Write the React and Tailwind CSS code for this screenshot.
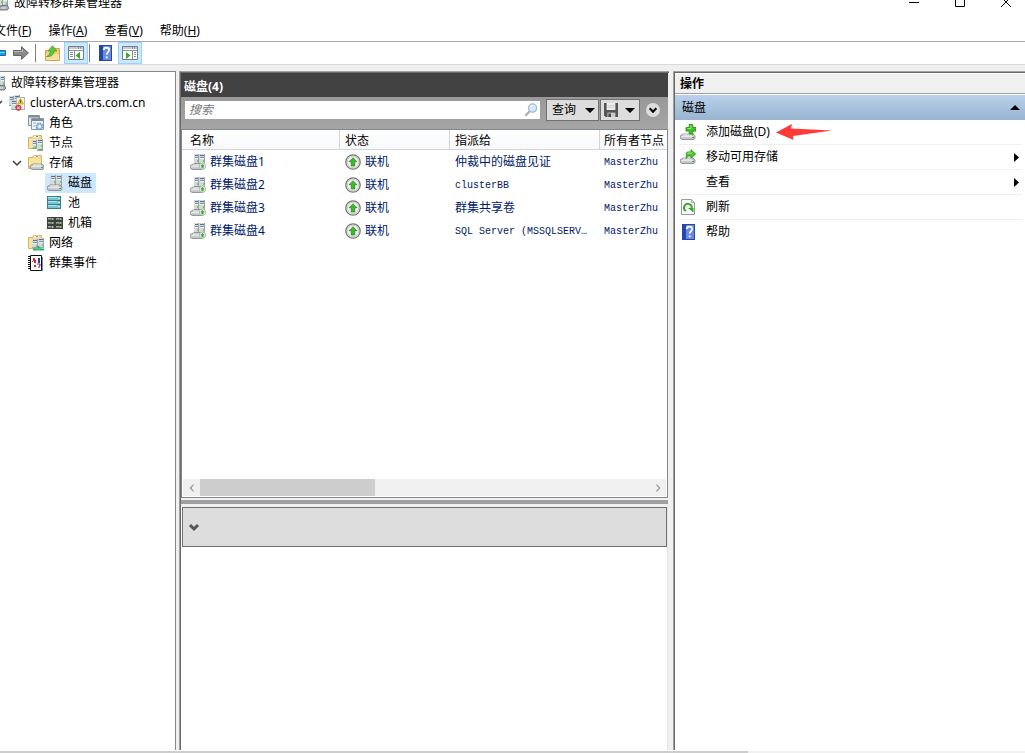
import React from "react";

const Svg = ({ children, className = "h-4 w-4" }) => (
  <svg viewBox="0 0 16 16" className={`${className} block shrink-0`} aria-hidden="true">
    {children}
  </svg>
);

const Server = ({ x, y, w = 5, h = 9 }) => (
  <g shapeRendering="crispEdges">
    <rect x={x} y={y} width={w} height={h} fill="#9aa3aa" />
    <rect x={x} y={y} width={w - 1} height={h - 1} fill="#d3d8dc" />
    <rect x={x + 1} y={y + 1} width={w - 2} height="1" fill="#5b7486" />
    <rect x={x + 1} y={y + 3} width={w - 2} height="1" fill="#7d93a2" />
    <rect x={x + 1} y={y + 4} width={w - 2} height="1" fill="#eef1f3" />
    <rect x={x + w - 2} y={y + 6} width="1" height="2" fill="#79d329" />
  </g>
);

const Drive = ({ x = 0, y = 10, w = 15 }) => (
  <g>
    <path
      d={`M${x + 3} ${y}h${w - 5}l2 2v2l-1 1.5H${x + 2}L${x} ${y + 4}V${y + 2}z`}
      fill="#c3c6c9"
      stroke="#808488"
      strokeWidth=".8"
    />
    <path d={`M${x + 3} ${y + 1}h${w - 6}`} stroke="#f7f8f9" />
    <path d={`M${x + 1} ${y + 2.7}h${w - 3}`} stroke="#ededef" />
    <rect x={x + w - 3} y={y + 3} width="2" height="1" fill="#3fb728" />
  </g>
);

const Folder = () => (
  <g>
    <path d="M.5 2.5h4l1-2h8v13H.5z" fill="#f6d989" stroke="#d9b463" />
    <path d="M1 4h12v9H1z" fill="#fbe3a0" />
    <path d="M6 1.5h5" stroke="#fff" strokeWidth="1.5" />
    <path d="M8 1.5h2" stroke="#4b9fd6" />
  </g>
);

const ManagerIcon = () => (
  <Svg>
    <Server x={5} y={0} w={5} h={12} />
    <Server x={10} y={1} w={5} h={12} />
    <path d="M7 11l7-1 2 3-2 2H6z" fill="#a6adb3" stroke="#596269" strokeWidth=".8" />
    <path d="M8 13h5" stroke="#edf1f4" />
  </Svg>
);

const ClusterIcon = () => (
  <Svg>
    <Server x={0} y={1} w={5} h={10} />
    <Server x={5} y={0} w={6} h={10} />
    <Server x={2} y={5} w={6} h={10} />
    <rect x="7.5" y="2.5" width="8" height="12" fill="#faf9ef" stroke="#b5b5ad" />
    <path d="M11.5 3.5l3 5.5h-6z" fill="#f6cf36" stroke="#c69216" strokeWidth=".7" />
    <path d="M11.5 5.3v2.4" stroke="#453410" />
    <circle cx="9.5" cy="12.8" r="2.7" fill="#d9484b" stroke="#b72a2e" strokeWidth=".6" />
    <path d="M8.3 11.6l2.4 2.4m0-2.4L8.3 14" stroke="#fff" strokeWidth=".9" />
  </Svg>
);

const RolesIcon = () => (
  <Svg>
    <path d="M.5.5h11v10H.5z" fill="#dfe7ec" stroke="#8795a0" />
    <path d="M3.5 3.5h12v11h-12z" fill="#eef3f7" stroke="#8a97a1" />
    <path d="M1 1.5h10M4 5h11" stroke="#788b99" strokeWidth="2" />
    <path d="M5 8h3m-3 3h2" stroke="#a0b0bd" />
    <circle cx="11.5" cy="11.5" r="3" fill="#b5d6ef" stroke="#6d9dc6" strokeWidth="2" strokeDasharray="1.5 .8" />
    <circle cx="11.5" cy="11.5" r="1.2" fill="#fff" />
  </Svg>
);

const NodesIcon = () => (
  <Svg>
    <Folder />
    <Server x={4} y={5} w={5} h={9} />
    <Server x={9} y={4} w={6} h={12} />
    <path d="M5 13h3m2 1.5h4" stroke="#52b82b" />
  </Svg>
);

const StorageIcon = () => (
  <Svg>
    <Folder />
    <Drive x={2} y={9} w={14} />
  </Svg>
);

const DisksIcon = () => (
  <Svg>
    <Server x={3} y={0} w={6} h={11} />
    <Server x={9} y={0} w={6} h={11} />
    <Drive />
  </Svg>
);

const PoolIcon = () => (
  <Svg>
    {[1, 5, 9].map((y) => (
      <g key={y}>
        <rect x=".5" y={y + 0.5} width="13" height="4" fill="#75c4cf" stroke="#307f8d" />
        <path d={`M1 ${y + 1.5}h9`} stroke="#b7e7ec" />
        <rect x="11" y={y + 2} width="2" height="1" fill="#f5e88a" />
      </g>
    ))}
  </Svg>
);

const EnclosureIcon = () => (
  <Svg>
    {[0, 8].map((x) =>
      [2, 6, 10].map((y) => (
        <g key={`${x}-${y}`} shapeRendering="crispEdges">
          <rect x={x} y={y} width="8" height="4" fill="#3c413f" />
          <rect x={x + 1} y={y + 1} width="6" height="2" fill="#737977" />
          <rect x={x + 1} y={y + 1} width="3" height="1" fill="#a4aaa7" />
          <rect x={x + 5} y={y + 1} width="1" height="2" fill="#86d43a" />
        </g>
      ))
    )}
  </Svg>
);

const NetworkIcon = () => (
  <Svg>
    <Folder />
    <Server x={4} y={4} w={6} h={9} />
    <Server x={10} y={3} w={6} h={10} />
    <path d="M10.5 11v3M5 14.5h11" stroke="#22aa80" strokeWidth="2" />
    <path d="M8 14h4" stroke="#69d4b0" />
  </Svg>
);

const EventsIcon = () => (
  <Svg>
    <path d="M2.5.5h11v15h-11z" fill="#fff" stroke="#111" />
    <path d="M1 1v14" stroke="#111" strokeWidth="2" strokeDasharray="1 1" />
    <path d="M14.5 2v14" stroke="#888" />
    <path d="M5 3h2v2h1v3H6V5H5zm1 7h2v2H6z" fill="#ed1c24" />
    <path d="M11 3v5" stroke="#263ca8" strokeWidth="2" />
    <path d="M9 9h3v2h-1v2" fill="none" stroke="#5a2d91" />
    <path d="M4 7l2-2" stroke="#ee3124" />
  </Svg>
);

const DiskOnlineIcon = () => (
  <Svg>
    <Server x={4} y={0} w={5} h={10} />
    <Server x={9} y={0} w={6} h={10} />
    <Drive w={14} />
    <circle cx="12.5" cy="12.2" r="3.2" fill="#edf3eb" stroke="#a3aca1" strokeWidth=".8" />
    <path d="M12.5 10l2.2 2.2h-1.2v2h-2v-2h-1.2z" fill="#30ad24" />
  </Svg>
);

const OnlineIcon = () => (
  <Svg>
    <circle cx="8" cy="8" r="7.2" fill="#ededed" stroke="#777" strokeWidth="1.3" />
    <circle cx="8" cy="8" r="5.7" fill="#f7f7f7" stroke="#ccc" />
    <path d="M8 3.7l4 4H9.8V12H6.2V7.7H4z" fill="#3eb82b" stroke="#238719" strokeWidth=".7" />
  </Svg>
);

const HelpIcon = ({ className = "h-4 w-[13px]" }) => (
  <svg viewBox="0 0 13 16" className={`${className} block shrink-0`} aria-hidden="true">
    <path d="M0 0h13v16H0z" fill="#2346a8" />
    <path d="M4 1h8v14H4z" fill="#6a8ade" />
    <path d="M4.7 5c0-3.2 5.5-3.2 5.5 0 0 2-2.5 2.2-2.5 4.5" fill="none" stroke="#fff" strokeWidth="1.7" />
    <path d="M6.8 11.5h1.8v1.8H6.8z" fill="#fff" />
  </svg>
);

const PanelIcon = ({ right }) => (
  <Svg>
    <path d="M.5 1.5h15v13H.5z" fill="#fff" stroke="#777f86" />
    <path d="M1 3h14" stroke="#c3ccd3" strokeWidth="2" />
    <path d="M1 5.5h14" stroke="#8a949b" />
    <path d="M10 3h4" stroke="#5d666d" strokeDasharray="1 1" />
    {right ? (
      <>
        <path d="M10.5 6v8" stroke="#858f96" />
        <path d="M12 7.5h2m-2 2h2m-2 2h2" stroke="#849099" />
        <path d="M4 7l4.5 3.5L4 14z" fill="#38ab26" />
      </>
    ) : (
      <>
        <path d="M6.5 6v8" stroke="#858f96" />
        <path d="M2 7.5h3m-3 2h3m-3 2h3" stroke="#849099" />
        <path d="M12 7l-4.5 3.5L12 14z" fill="#38ab26" />
      </>
    )}
  </Svg>
);

const UpFolderIcon = () => (
  <Svg>
    <path d="M.5 5.5h8l1-2h5v12H.5z" fill="#efcf79" stroke="#c9a55a" />
    <path d="M1 9h13v6H1z" fill="#f8dfa0" />
    <path d="M1.5 11.5c2.6-1 3.8-3 4-5.5H3L7.5.8 12 6H9.3c-.6 4-3.5 6-7.8 5.5z" fill="#5ec932" stroke="#3a9a28" strokeWidth=".7" />
  </Svg>
);

const ForwardIcon = () => (
  <Svg>
    <path d="M.5 5.5h8V1.7L15.4 8l-6.9 6.3v-3.8h-8z" fill="#8b8b8b" stroke="#626262" />
    <path d="M1 6.5h8.5V4" fill="none" stroke="#bbb" />
  </Svg>
);

const BackIcon = () => (
  <Svg>
    <path d="M15.5 5.5h-8V1.7L.6 8l6.9 6.3v-3.8h8z" fill="#299bdb" stroke="#1068ad" />
    <path d="M7 7.5h8" stroke="#6fc9ee" />
  </Svg>
);

const AddDiskIcon = () => (
  <Svg>
    <Drive w={15} />
    <path d="M9.2.5h3.6v3H16v3.6h-3.2v3H9.2v-3H6V3.5h3.2z" fill="#40c323" stroke="#238711" strokeWidth=".8" />
    <path d="M11 1.5v3H7.5" fill="none" stroke="#9be982" />
  </Svg>
);

const MoveDiskIcon = () => (
  <Svg>
    <Drive y={9} w={15} />
    <path d="M6.3 9.5V4.8c0-1.3.7-1.9 2-1.9H11V.6L15.7 5 11 9.3V7H8.6c-1 0-1.5 1-2.3 2.5z" fill="#4fc62f" stroke="#288c19" strokeWidth=".8" />
    <path d="M7.5 5c.3-.8.8-1 1.5-1h3" fill="none" stroke="#a3ed89" />
  </Svg>
);

const RefreshIcon = () => (
  <svg viewBox="0 0 14 16" className="block h-4 w-3.5 shrink-0" aria-hidden="true">
    <path d="M.5.5h10l3 3v12H.5z" fill="#fafafa" stroke="#999" />
    <path d="M10.5.5v3h3" fill="#ddd" stroke="#aaa" />
    <path d="M5 12A3.8 3.8 0 1 1 10.6 9.5" fill="none" stroke="#32aa29" strokeWidth="2" />
    <path d="M7 9h5.5v4.5z" fill="#32aa29" />
  </svg>
);

const SaveIcon = () => (
  <Svg className="h-3.5 w-3.5">
    <path d="M0 0h16v16H2l-2-2z" fill="#555" />
    <path d="M3 0h10v8H3z" fill="#eee" />
    <path d="M4 3h8m-8 2h8" stroke="#ccc" />
    <path d="M4 11h9v5H4z" fill="#ccc" />
    <path d="M5 12h3v4H5z" fill="#444" />
  </Svg>
);

const MagnifierIcon = () => (
  <Svg className="h-3.5 w-3.5">
    <path d="M1.5 14.5l5-5" stroke="#b8a99e" strokeWidth="2.5" />
    <circle cx="9.8" cy="5.8" r="4.7" fill="#d0e8fa" stroke="#a5b9c9" strokeWidth="1.5" />
    <path d="M7 5c.5-1.5 1.5-2 3-2" stroke="#fff" fill="none" />
  </Svg>
);

const Triangle = ({ direction }) => {
  if (direction === "right")
    return (
      <svg viewBox="0 0 5 9" className="h-[9px] w-[5px]" aria-hidden="true">
        <path d="M0 0l5 4.5L0 9z" />
      </svg>
    );
  return (
    <svg viewBox="0 0 10 5" className="h-[5px] w-[10px]" aria-hidden="true">
      <path d={direction === "up" ? "M0 5l5-5 5 5z" : "M0 0h10L5 5z"} />
    </svg>
  );
};

const Chevron = ({ d, className = "h-3 w-3", width = 1.5 }) => (
  <svg viewBox="0 0 12 12" className={`${className} shrink-0`} fill="none" stroke="currentColor" strokeWidth={width} aria-hidden="true">
    <path d={d} />
  </svg>
);

const TreeItem = ({ icon, label, pad, open, selected }) => (
  <li className={`flex h-5 items-center ${pad}`}>
    <span className="flex w-[18px] shrink-0 justify-center text-[#404040]">
      {open && <Chevron d="M2 4l4 4 4-4" className="h-3 w-3" />}
    </span>
    <button className={`flex h-5 items-center gap-[5px] whitespace-nowrap pl-0.5 pr-1 ${selected ? "bg-[#cce8ff]" : ""}`}>
      {icon}
      <span>{label}</span>
    </button>
  </li>
);

const tree = [
  { icon: <ManagerIcon />, label: "故障转移群集管理器", pad: "-ml-[30px]" },
  { icon: <ClusterIcon />, label: "clusterAA.trs.com.cn", pad: "-ml-[11px]", open: true },
  { icon: <RolesIcon />, label: "角色", pad: "pl-2" },
  { icon: <NodesIcon />, label: "节点", pad: "pl-2" },
  { icon: <StorageIcon />, label: "存储", pad: "pl-2", open: true },
  { icon: <DisksIcon />, label: "磁盘", pad: "pl-[27px]", selected: true },
  { icon: <PoolIcon />, label: "池", pad: "pl-[27px]" },
  { icon: <EnclosureIcon />, label: "机箱", pad: "pl-[27px]" },
  { icon: <NetworkIcon />, label: "网络", pad: "pl-2" },
  { icon: <EventsIcon />, label: "群集事件", pad: "pl-2" },
];

const disks = [
  ["群集磁盘1", "仲裁中的磁盘见证", false],
  ["群集磁盘2", "clusterBB", true],
  ["群集磁盘3", "群集共享卷", false],
  ["群集磁盘4", "SQL Server (MSSQLSERV…", true],
];

const menus = [
  ["文件", "F"],
  ["操作", "A"],
  ["查看", "V"],
  ["帮助", "H"],
];

const actions = [
  { icon: <AddDiskIcon />, label: "添加磁盘(D)", marked: true },
  { icon: <MoveDiskIcon />, label: "移动可用存储", sub: true },
  { label: "查看", sub: true },
  { icon: <RefreshIcon />, label: "刷新" },
  { icon: <HelpIcon />, label: "帮助" },
];

const Mono = ({ children }) => (
  <span className="font-['Liberation_Mono','Noto_Sans_CJK_SC',monospace] text-[10px]">{children}</span>
);

const ToggleButton = ({ label, children }) => (
  <button aria-label={label} className="flex h-[22px] w-6 items-center justify-center border border-[#99d1ff] bg-[#cce8ff]">
    {children}
  </button>
);

export default function App() {
  return (
    <div className="flex h-screen flex-col overflow-hidden bg-white font-['Noto_Sans','Noto_Sans_CJK_SC',sans-serif] text-xs leading-4 text-black">
      <header className="flex h-5 shrink-0 items-start justify-between overflow-hidden">
        <div className="-ml-[7px] -mt-[5px] flex items-center gap-[5px]">
          <ManagerIcon />
          <span>故障转移群集管理器</span>
        </div>
        <div className="-mt-1 flex gap-[34px] pr-[13px]">
          <button aria-label="最小化">
            <svg viewBox="0 0 12 12" className="h-3 w-3" aria-hidden="true">
              <path d="M1 6.5h10" stroke="#000" />
            </svg>
          </button>
          <button aria-label="最大化">
            <svg viewBox="0 0 12 12" className="h-3 w-3" fill="none" stroke="#000" aria-hidden="true">
              <path d="M1.5 1.5h9v9h-9z" />
            </svg>
          </button>
          <button aria-label="关闭">
            <svg viewBox="0 0 12 12" className="h-3 w-3" stroke="#000" aria-hidden="true">
              <path d="M1 1l10 10M11 1L1 11" />
            </svg>
          </button>
        </div>
      </header>

      <nav className="-ml-1.5 flex h-[22px] shrink-0 items-center gap-[17px] border-b border-[#aaaaaa]">
        {menus.map(([name, key]) => (
          <button key={key} className="whitespace-nowrap">
            {name}(<u>{key}</u>)
          </button>
        ))}
      </nav>

      <div className="-ml-2.5 flex h-[23px] shrink-0 items-end border-b border-[#d9d9d9]">
        <div className="flex items-center">
          <button aria-label="后退"><BackIcon /></button>
          <button aria-label="前进" className="ml-[7px]"><ForwardIcon /></button>
          <span className="ml-1.5 h-[18px] w-px bg-[#808080]" />
          <button aria-label="向上" className="ml-[9px] mr-[3px]"><UpFolderIcon /></button>
          <ToggleButton label="控制台树"><PanelIcon /></ToggleButton>
          <span className="ml-px h-[18px] w-px bg-[#808080]" />
          <button aria-label="帮助" className="ml-[9px] mr-1.5"><HelpIcon /></button>
          <ToggleButton label="操作窗格"><PanelIcon right /></ToggleButton>
        </div>
      </div>

      <main className="flex min-h-0 flex-1 bg-[#f0f0f0] pt-1.5">
        <aside className="w-44 shrink-0 overflow-hidden border-r border-t border-[#828790] bg-white">
          <ul className="pt-px">
            {tree.map((t) => (
              <TreeItem key={t.label} {...t} />
            ))}
          </ul>
        </aside>

        <section className="ml-[3px] mr-1 flex min-w-0 flex-1 flex-col border-l border-t border-[#a0a0a0]">
          <div className="flex min-h-0 flex-1 flex-col border-l border-t border-[#696969]">
            <div className="flex min-h-0 flex-[427] flex-col">
              <h1 className="mr-px flex h-6 shrink-0 items-center bg-[#424242] px-[3px] pt-1 font-bold text-white">磁盘(4)</h1>
              <div className="mr-px flex h-8 shrink-0 items-start bg-linear-to-b from-[#999999] to-[#a5a5a5] pl-1 pr-2 pt-0.5">
                <label className="mt-0.5 flex h-[18px] min-w-0 flex-1 items-center bg-white pl-1 pr-0.5">
                  <input
                    aria-label="搜索"
                    placeholder="搜索"
                    className="min-w-0 flex-1 italic outline-none placeholder:text-[#777777]"
                  />
                  <MagnifierIcon />
                </label>
                <button className="ml-1.5 flex h-[22px] w-[53px] items-center justify-between border border-[#707070] bg-[#dddddd] pl-[5px] pr-[3px]">
                  查询 <Triangle />
                </button>
                <button aria-label="保存查询" className="ml-px flex h-[22px] w-10 items-center justify-between border border-[#707070] bg-[#dddddd] pl-[3px] pr-1">
                  <SaveIcon /> <Triangle />
                </button>
                <button aria-label="展开" className="ml-1.5 mt-1 flex h-3.5 w-3.5 items-center justify-center rounded-full bg-[#dddddd]">
                  <Chevron d="M2 4l4 4 4-4" className="h-2.5 w-2.5" width={2.5} />
                </button>
              </div>
              <div className="mr-px flex min-h-0 flex-1 flex-col border border-[#828790] bg-white">
                <div className="min-h-0 flex-1 overflow-hidden">
                  <table className="w-full table-fixed border-separate border-spacing-0 text-left">
                    <colgroup>
                      <col className="w-[158px]" />
                      <col className="w-[110px]" />
                      <col className="w-[150px]" />
                      <col />
                    </colgroup>
                    <thead>
                      <tr className="h-5 bg-linear-to-b from-white to-[#f7f8fa]">
                        {["名称", "状态", "指派给", "所有者节点"].map((h, i) => (
                          <th
                            key={h}
                            className={`whitespace-nowrap border-b border-[#d5d5d5] p-0 pt-0.5 font-normal ${i === 0 ? "pl-2" : i === 3 ? "pl-1" : "pl-[5px]"} ${i < 3 ? "border-r" : ""}`}
                          >
                            {h}
                          </th>
                        ))}
                      </tr>
                    </thead>
                    <tbody className="text-[#001a68]">
                      {disks.map(([name, assigned, latin]) => (
                        <tr key={name} className="h-[23px]">
                          <td className="p-0 pl-2">
                            <span className="flex items-center gap-1">
                              <DiskOnlineIcon />
                              <span>{name}</span>
                            </span>
                          </td>
                          <td className="p-0 pl-[5px]">
                            <span className="flex items-center gap-1">
                              <OnlineIcon />
                              <span>联机</span>
                            </span>
                          </td>
                          <td className="overflow-hidden whitespace-nowrap p-0 pl-[5px]">
                            {latin ? <Mono>{assigned}</Mono> : assigned}
                          </td>
                          <td className="p-0 pl-1"><Mono>MasterZhu</Mono></td>
                        </tr>
                      ))}
                    </tbody>
                  </table>
                </div>
                <div className="mx-px mb-px flex h-[17px] shrink-0 items-center bg-[#f0f0f0] text-[#999999]">
                  <button aria-label="向左滚动" className="flex w-[17px] justify-center">
                    <Chevron d="M8 2L4 6l4 4" className="h-2.5 w-2.5" />
                  </button>
                  <div className="h-full flex-1">
                    <div className="h-full w-[39%] bg-[#cdcdcd]" />
                  </div>
                  <button aria-label="向右滚动" className="flex w-[17px] justify-center">
                    <Chevron d="M4 2l4 4-4 4" className="h-2.5 w-2.5" />
                  </button>
                </div>
              </div>
            </div>
            <div className="mr-px mt-0.5 h-1 shrink-0 bg-[#a0a0a0]" />
            <div className="mr-px flex min-h-0 flex-[247] flex-col border-r border-[#e3e3e3] bg-white">
              <div className="h-[3px] shrink-0 bg-[#f0f0f0]" />
              <div className="ml-px flex h-10 shrink-0 items-center border border-[#707070] bg-[#dddddd] px-[5px] text-[#555555]">
                <button aria-label="展开详细信息">
                  <Chevron d="M2 4l4 4 4-4" className="block h-3 w-3" width={3} />
                </button>
              </div>
            </div>
          </div>
        </section>

        <aside className="flex w-[352px] shrink-0 flex-col border-l border-t border-[#a0a0a0]">
          <div className="flex-1 border-l border-t border-[#696969] bg-white">
            <h2 className="mt-px flex h-5 items-center border-b border-[#a0a0a0] bg-[#f0f0f0] pl-[5px] font-bold">操作</h2>
            <div className="mt-px flex h-[25px] items-center justify-between bg-linear-to-b from-[#b9d1ea] to-[#99b4d1] pl-[7px] pr-[5px]">
              <span>磁盘</span>
              <Triangle direction="up" />
            </div>
            <ul className="pl-1 pr-[3px]">
              {actions.map(({ icon, label, sub, marked }) => (
                <li key={label} className="border-b border-[#f0f0f0] last:border-b-0">
                  <button className="flex h-6 w-full items-center pr-[3px]">
                    <span className="flex w-[18px] shrink-0 justify-center">{icon}</span>
                    <span className="ml-[9px]">{label}</span>
                    {marked && (
                      <svg viewBox="0 0 56 16" className="ml-1.5 h-4 w-14" aria-hidden="true">
                        <path d="M0 8.5L16 0l-1 4.5 41 2-39 5.5.5 4z" fill="#ff3b38" />
                      </svg>
                    )}
                    {sub && (
                      <span className="ml-auto">
                        <Triangle direction="right" />
                      </span>
                    )}
                  </button>
                </li>
              ))}
            </ul>
          </div>
        </aside>
      </main>

      <footer className="mt-px h-0.5 shrink-0 bg-[#f0f0f0]">
        <div className="h-full w-[73%] bg-[#cdcdcd]" />
      </footer>
    </div>
  );
}
